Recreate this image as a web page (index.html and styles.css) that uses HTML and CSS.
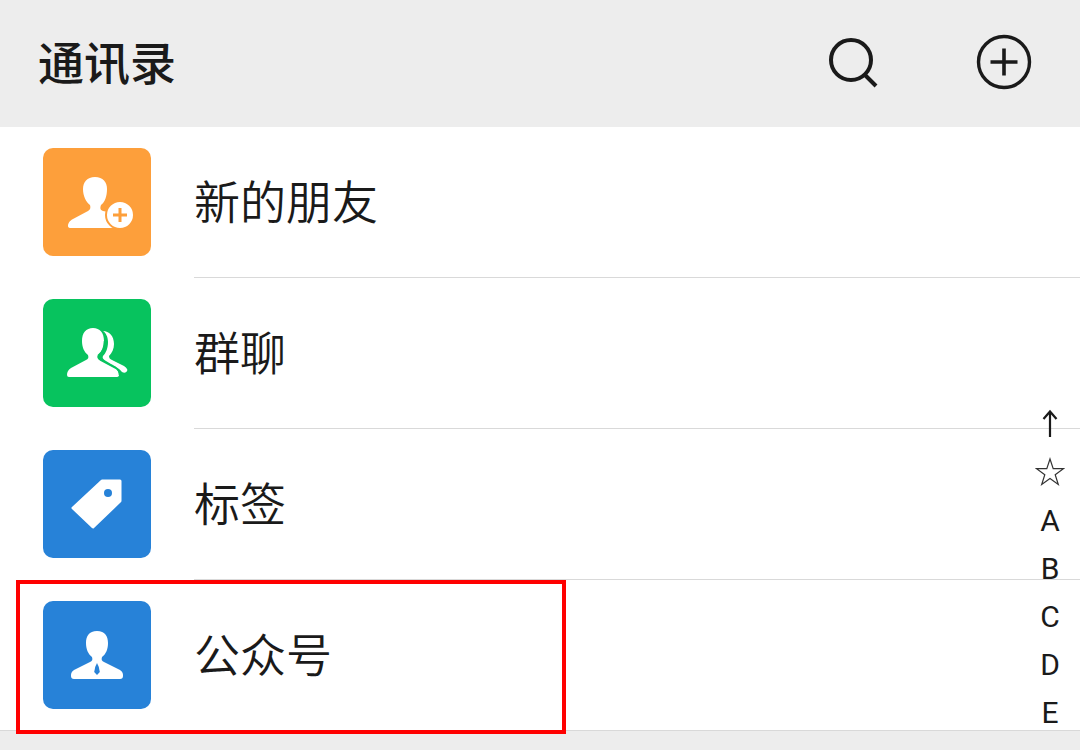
FILE: index.html
```html
<!DOCTYPE html>
<html lang="zh-CN">
<head>
    <meta charset="UTF-8">
    <meta name="viewport" content="width=device-width, initial-scale=1.0">
    <title>通讯录</title>
    <link rel="stylesheet" href="styles.css">
</head>
<body>
<div class="page">
    <header class="topbar">
        <h1 class="topbar-title">通讯录</h1>
        <svg class="topbar-search" width="56" height="56" viewBox="0 0 56 56">
            <circle cx="25" cy="25" r="20" fill="none" stroke="#1a1a1a" stroke-width="4"/>
            <path d="M38 39 L50 51" fill="none" stroke="#1a1a1a" stroke-width="4"/>
        </svg>
        <svg class="topbar-add" width="56" height="56" viewBox="0 0 56 56">
            <circle cx="28" cy="28" r="25.5" fill="none" stroke="#1a1a1a" stroke-width="3.4"/>
            <path d="M14.500 28 H41.500 M28 14.500 V41.500" fill="none" stroke="#1a1a1a" stroke-width="3.6"/>
        </svg>
    </header>

    <ul class="list">
        <li class="row">
            <div class="tile tile-orange">
                <svg width="108" height="108" viewBox="0 0 108 108">
                    <path fill="#fff" d="M52 29 C44 29 40 34 40 41 C40 48 43 54 47 57 C48 60 47 62 45 63 L30 71 C26 73 25 76 25 78 Q25 80 28 80 L75 80 L75 66 L60 63 C57 62 57 60 58 57 C62 54 64 48 64 41 C64 34 60 29 52 29 Z"/>
                    <circle cx="77" cy="67" r="14" fill="#fff" stroke="#fd9f3b" stroke-width="2"/>
                    <path d="M70 67 H84 M77 60 V74" fill="none" stroke="#fd9f3b" stroke-width="3"/>
                </svg>
            </div>
            <div class="row-text">新的朋友</div>
        </li>
        <li class="row">
            <div class="tile tile-green">
                <svg width="108" height="108" viewBox="0 0 108 108">
                    <path fill="#fff" d="M60 32 C66 32 71 37 71 45 C71 50 69 54 66 57 C66 59 67 60 69 61 L81 67 C84 69 85 71 84 72 C83 74 81 74 79 73 C77 70 72 67 68 65 L63 62 C60 60 59 59 60 57 C63 54 65 49 65 43 C65 38 63 34 60 32 Z"/>
                    <path fill="#fff" d="M50 29 C43 29 39 34 39 42 C39 48 41 53 45 56 C46 59 45 60 43 61 L28 69 C25 71 24 73 24 76 Q24 78 26 78 L73 78 Q76 78 76 76 C76 73 75 71 72 69 L57 61 C55 60 54 59 55 56 C59 53 61 48 61 42 C61 34 57 29 50 29 Z"/>
                    <path fill="none" stroke="#07c35e" stroke-width="1.500" d="M61.500 42 C61.500 48 59.500 53 55.500 56 C54.500 59 55.500 60 57.500 61 L72.500 69 C75.500 71 76.500 73 76.500 76"/>
                </svg>
            </div>
            <div class="row-text">群聊</div>
        </li>
        <li class="row">
            <div class="tile tile-blue">
                <svg width="108" height="108" viewBox="0 0 108 108">
                    <path fill="#fff" stroke="#fff" stroke-width="3" stroke-linejoin="round" d="M59 31 L77 31 L77 51 L50 77 L30 58 Z"/>
                    <circle cx="65" cy="43" r="4" fill="#2782d8"/>
                </svg>
            </div>
            <div class="row-text">标签</div>
        </li>
        <li class="row row-last">
            <div class="tile tile-blue">
                <svg width="108" height="108" viewBox="0 0 108 108">
                    <path fill="#fff" d="M54 30 C46 30 43 35 43 42 C43 48 45 53 49 56 C50 59 49 60 47 61 L31 69 C28 71 28 73 28 75 Q28 78 31 78 L77 78 Q80 78 80 75 C80 73 80 71 77 69 L61 61 C59 60 58 59 59 56 C63 53 65 48 65 42 C65 35 62 30 54 30 Z"/>
                    <path fill="#2782d8" d="M54 62 L55.800 66 L56.800 71 L54 74 L51.200 71 L52.200 66 Z"/>
                </svg>
            </div>
            <div class="row-text">公众号</div>
        </li>
    </ul>

    <div class="tabbar"></div>

    <div class="index">
        <svg class="index-icon" width="28" height="48" viewBox="0 0 28 48">
            <path d="M14 11 V37 M7.500 19 L14 11.500 L20.500 19" fill="none" stroke="#1a1a1a" stroke-width="2.200"/>
        </svg>
        <svg class="index-icon" width="30" height="48" viewBox="0 0 30 48">
            <path d="M15 11 L18.200 20.600 L28.400 20.700 L20.200 26.800 L23.300 36.500 L15 30.600 L6.700 36.500 L9.800 26.800 L1.600 20.700 L11.800 20.600 Z" fill="none" stroke="#333" stroke-width="1.200"/>
        </svg>
        <span>A</span>
        <span>B</span>
        <span>C</span>
        <span>D</span>
        <span>E</span>
        <span>F</span>
    </div>

    <div class="highlight"></div>
</div>
</body>
</html>
```

FILE: styles.css
```css
* {
    box-sizing: border-box;
}
body {
    margin: 0;
    font-family: "Noto Sans CJK SC", "Noto Sans", sans-serif;
    color: #1a1a1a;
    background: #fff;
}
.page {
    position: relative;
    height: 750px;
    overflow: hidden;
}
.topbar {
    display: flex;
    align-items: center;
    height: 127px;
    padding-left: 38px;
    background: #ededed;
}
.topbar-title {
    flex: 1;
    margin: 0 0 6px;
    font-size: 46px;
    font-weight: 500;
    line-height: 121px;
}
.topbar-search {
    margin-right: 94px;
    margin-bottom: 2px;
}
.topbar-add {
    margin-right: 48px;
    margin-bottom: 3px;
}
.list {
    margin: 0;
    padding: 0;
    list-style: none;
}
.row {
    display: flex;
    height: 151px;
    padding-left: 43px;
}
.row-last {
    height: 150px;
}
.tile {
    width: 108px;
    height: 108px;
    margin-top: 21px;
    border-radius: 10px;
}
.tile svg {
    display: block;
}
.tile-orange {
    background: #fd9f3b;
}
.tile-green {
    background: #07c35e;
}
.tile-blue {
    background: #2782d8;
}
.row-text {
    flex: 1;
    margin-left: 43px;
    font-size: 46px;
    font-weight: 350;
    line-height: 144px;
    border-bottom: 1px solid #d9d9d9;
}
.row-last .row-text {
    border-bottom: none;
}
.tabbar {
    height: 20px;
    border-top: 1px solid #d9d9d9;
    background: #ededed;
}
.index {
    position: absolute;
    top: 400px;
    right: 0;
    display: flex;
    flex-direction: column;
    align-items: center;
    width: 60px;
    font-family: Roboto, sans-serif;
    font-size: 30px;
}
.index span {
    height: 48px;
    line-height: 50px;
}
.highlight {
    position: absolute;
    left: 16px;
    top: 580px;
    width: 550px;
    height: 154px;
    border: 4px solid #ff0000;
}
```
